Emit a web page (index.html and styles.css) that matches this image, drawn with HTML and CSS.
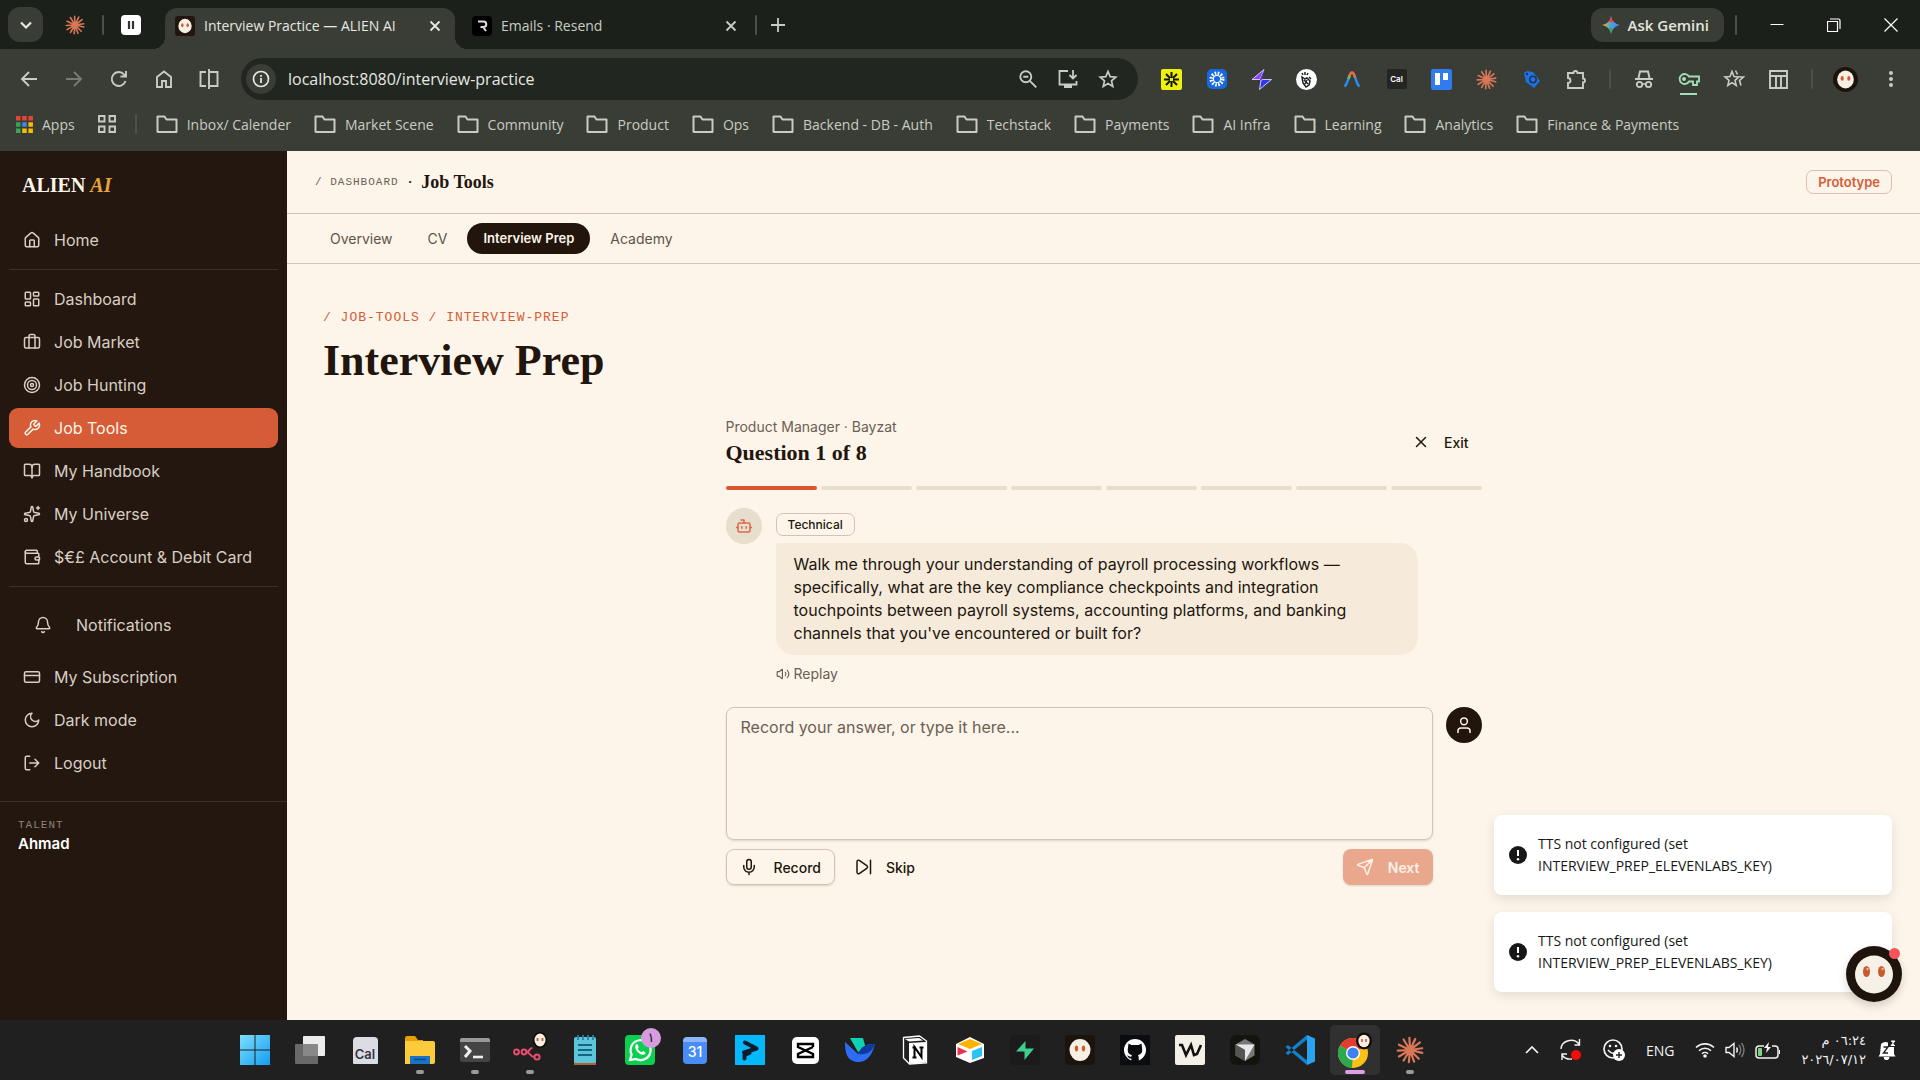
FILE: index.html
```html
<!DOCTYPE html>
<html lang="en">
<head>
  <meta charset="UTF-8" />
  <meta name="viewport" content="width=device-width, initial-scale=1.0"/>
  <title>Interview Practice — ALIEN AI</title>
  <link rel="stylesheet" href="styles.css">
</head>
<body>
  <!-- shared icons -->
  <svg class="sprite" aria-hidden="true">
    <symbol id="folder" viewBox="0 0 22 20"><path d="M1.5 17.5v-15h7l2 3h10v12.500h-18.500z" fill="none" stroke="currentColor" stroke-width="2" stroke-linejoin="round"/></symbol>
    <symbol id="close" viewBox="0 0 12 12"><path d="M1.500 1.500l9 9M10.500 1.500l-9 9" fill="none" stroke="currentColor" stroke-width="1.800"/></symbol>
    <symbol id="burst" viewBox="0 0 24 24">
      <g stroke="#d97757" stroke-width="1.900" stroke-linecap="round">
        <path d="M12 12L11.500 1.500M12 12L16.500 2.500M12 12L20.500 5.500M12 12L22.500 10.500M12 12L22.500 14.500M12 12L19.500 19.500M12 12L15.500 22M12 12L11 22.500M12 12L6.500 21M12 12L2.500 17.500M12 12L1.500 12.500M12 12L2.500 7.500M12 12L6.500 3"/>
      </g>
    </symbol>
    <symbol id="face" viewBox="0 0 24 24">
      <ellipse cx="12" cy="12" rx="8" ry="8.600" fill="#f6f0e4"/>
      <ellipse cx="8.800" cy="11" rx="1.500" ry="2.300" fill="#cf5b36"/>
      <ellipse cx="15.200" cy="11" rx="1.500" ry="2.300" fill="#cf5b36"/>
    </symbol>
    <symbol id="alert" viewBox="0 0 20 20"><circle cx="10" cy="10" r="9" fill="#171717"/><path d="M10 5v6" stroke="#fff" stroke-width="2"/><circle cx="10" cy="14.200" r="1.200" fill="#fff"/></symbol>
  </svg>

  <header class="browser">
    <div class="tabstrip">
      <button class="tab-search" aria-label="Search tabs"><svg width="14" height="14" viewBox="0 0 14 14"><path d="M2 4.500l5 5 5-5" fill="none" stroke="currentColor" stroke-width="2.200"/></svg></button>
      <button class="pin" aria-label="Claude"><svg width="20" height="20"><use href="#burst"/></svg></button>
      <span class="sep"></span>
      <button class="pin" aria-label="Recorder"><svg width="20" height="20" viewBox="0 0 20 20"><rect width="20" height="20" rx="4" fill="#fff"/><path d="M8 6v8M12 6v8" stroke="#333" stroke-width="2.200"/></svg></button>
      <div class="tab tab-active">
        <svg width="20" height="20" viewBox="0 0 24 24"><rect width="24" height="24" rx="4" fill="#21150e"/><use href="#face"/></svg>
        <span class="tab-title">Interview Practice — ALIEN AI</span>
        <button class="tab-close" aria-label="Close tab"><svg width="12" height="12"><use href="#close"/></svg></button>
      </div>
      <div class="tab">
        <svg width="20" height="20" viewBox="0 0 20 20"><rect width="20" height="20" rx="4" fill="#000"/><path d="M6 5.500h5.500a2.500 2.500 0 010 5.500H8.500M11 11l3 4" fill="none" stroke="#ddd" stroke-width="2"/></svg>
        <span class="tab-title">Emails · Resend</span>
        <button class="tab-close" aria-label="Close tab"><svg width="12" height="12"><use href="#close"/></svg></button>
      </div>
      <span class="sep"></span>
      <button class="new-tab" aria-label="New tab"><svg width="14" height="14" viewBox="0 0 14 14"><path d="M7 0v14M0 7h14" stroke="currentColor" stroke-width="1.800"/></svg></button>
      <div class="window-controls">
        <button class="gemini">
          <svg width="18" height="18" viewBox="0 0 18 18">
            <defs><linearGradient id="gem" x1="0" y1="0.500" x2="1" y2="0.500"><stop offset="0" stop-color="#fbbc04"/><stop offset="0.450" stop-color="#4fa3d8"/><stop offset="1" stop-color="#4285f4"/></linearGradient></defs>
            <path d="M9 0c1 5 4 8 9 9-5 1-8 4-9 9-1-5-4-8-9-9 5-1 8-4 9-9z" fill="url(#gem)"/>
            <path d="M9 0c.6 3 1.500 4.600 3 6H6c1.500-1.400 2.400-3 3-6z" fill="#ea4335"/>
            <path d="M9 18c-.6-3-1.500-4.600-3-6h4c0 2-.4 3-1 6z" fill="#34a853"/>
          </svg>Ask Gemini</button>
        <span class="sep"></span>
        <button aria-label="Minimize"><svg width="14" height="14" viewBox="0 0 14 14"><path d="M0.500 6.500h13" stroke="currentColor"/></svg></button>
        <button aria-label="Restore"><svg width="14" height="14" viewBox="0 0 14 14"><path d="M0.500 3.500h10v10h-10zM3 1h8.500q1.500 0 1.500 1.500V11" fill="none" stroke="currentColor" stroke-width="1.200"/></svg></button>
        <button aria-label="Close"><svg width="14" height="14" viewBox="0 0 14 14"><path d="M0.500 0.500l13 13M13.500 0.500l-13 13" stroke="currentColor" stroke-width="1.200"/></svg></button>
      </div>
    </div>

    <div class="toolbar">
      <button aria-label="Back"><svg width="18" height="18" viewBox="0 0 18 18"><path d="M17 9H2M9 2L2 9l7 7" fill="none" stroke="currentColor" stroke-width="1.900"/></svg></button>
      <button class="dim" aria-label="Forward"><svg width="18" height="18" viewBox="0 0 18 18"><path d="M1 9h15M9 2l7 7-7 7" fill="none" stroke="currentColor" stroke-width="1.900"/></svg></button>
      <button aria-label="Reload"><svg width="18" height="18" viewBox="0 0 18 18"><path d="M15.500 11A7 7 0 1114 4.300l2 2M16 1v5.500h-5.500" fill="none" stroke="currentColor" stroke-width="1.900"/></svg></button>
      <button aria-label="Home"><svg width="18" height="18" viewBox="0 0 18 18"><path d="M2 7l7-5.500L16 7v10h-5v-6H7v6H2z" fill="none" stroke="currentColor" stroke-width="1.900"/></svg></button>
      <button aria-label="Split view"><svg width="20" height="20" viewBox="0 0 20 20"><path d="M7 3H1.500v14H7M10 0v20M11 3h7.500v14H11" fill="none" stroke="currentColor" stroke-width="1.900"/></svg></button>
      <div class="omnibox">
        <button class="site-info" aria-label="Site information"><svg width="18" height="18" viewBox="0 0 18 18"><circle cx="9" cy="9" r="7.500" fill="none" stroke="currentColor" stroke-width="1.700"/><path d="M9 8v5M9 5v1.800" stroke="currentColor" stroke-width="1.800"/></svg></button>
        <input class="url" type="text" aria-label="Address bar" value="localhost:8080/interview-practice" />
        <button class="omni-btn" aria-label="Zoom"><svg width="18" height="18" viewBox="0 0 18 18"><circle cx="6.800" cy="6.800" r="5.500" fill="none" stroke="currentColor" stroke-width="1.900"/><path d="M4.300 6.800h5M10.800 10.800l6.500 6.500" stroke="currentColor" stroke-width="1.900"/></svg></button>
        <button class="omni-btn" aria-label="Install app"><svg width="20" height="20" viewBox="0 0 20 20"><path d="M10 2H1.500v13.500h17V12M15 1v8M11.500 6l3.500 3.500L18.500 6" fill="none" stroke="currentColor" stroke-width="1.800"/><path d="M6 15h8v4H6z" fill="currentColor"/></svg></button>
        <button class="omni-btn" aria-label="Bookmark this tab"><svg width="20" height="20" viewBox="0 0 20 20"><path d="M10 2.500l2.200 5.200 5.600.5-4.300 3.700 1.300 5.500-4.800-2.900-4.800 2.900 1.300-5.500L2.200 8.200l5.600-.5z" fill="none" stroke="currentColor" stroke-width="1.700"/></svg></button>
      </div>
      <button aria-label="Extension"><svg width="21" height="21" viewBox="0 0 21 21"><rect width="21" height="21" rx="2" fill="#eef010"/><path d="M10.500 3v6M10.500 12v6M3 10.500h6M12 10.500h6M5 5l4 4M12 12l4 4M16 5l-4 4M9 12l-4 4" stroke="#141500" stroke-width="2"/></svg></button>
      <button aria-label="Extension"><svg width="20" height="20" viewBox="0 0 20 20"><rect width="20" height="20" rx="5" fill="#1768e0"/><circle cx="10" cy="10" r="5.500" fill="none" stroke="#fff" stroke-width="4" stroke-dasharray="1.500 1.380"/><circle cx="10" cy="10" r="3.700" fill="none" stroke="#fff" stroke-width="1"/></svg></button>
      <button aria-label="Extension"><svg width="21" height="21" viewBox="0 0 21 21"><path d="M13 0.500L1 10.500h8z" fill="#8d45f5" stroke="#d3c4ff"/><path d="M12 10.500h8.500L8.500 20.500 10 11z" fill="#3038ee" stroke="#d3c4ff"/><path d="M13 1l-2 9.500h-2z" fill="#5c37ef"/></svg></button>
      <button aria-label="Extension"><svg width="21" height="21" viewBox="0 0 21 21"><circle cx="10.500" cy="10.500" r="10.500" fill="#fff"/><path d="M6 8l3 2 2-1 3 3-1 4-3 2-3-4zM8 11l4 4M11 11l-2 4M6 4l1 2M9 3v3M12 4l-1 2M13 8l2 2" fill="none" stroke="#222" stroke-width="1.500"/></svg></button>
      <button aria-label="Extension"><svg width="18" height="18" viewBox="0 0 18 18"><path d="M1.500 16.500C5 14 6 2.500 9 2.500s4 11.500 7.500 14" fill="none" stroke="#2b8cf0" stroke-width="2.600"/><path d="M6 7.500C7 4 7.800 2.500 9 2.500s2 1.500 3 5" fill="none" stroke="#ef6a3a" stroke-width="2.600"/><path d="M5.500 9l1-3" stroke="#5fc25a" stroke-width="2.600"/></svg></button>
      <button aria-label="Cal extension"><span class="cal-ext">Cal</span></button>
      <button aria-label="Trello"><svg width="21" height="21" viewBox="0 0 21 21"><rect width="21" height="21" rx="2" fill="#2f7bf0"/><path d="M4 4h5v12H4zM12 4h5v7h-5z" fill="#fff"/></svg></button>
      <button aria-label="Claude"><svg width="21" height="21"><use href="#burst"/></svg></button>
      <button aria-label="Extension"><svg width="18" height="19" viewBox="0 0 18 19"><path d="M1 3l3-2 6 1 7 9-6 7-8-6z" fill="#1a73e8"/><circle cx="10" cy="9.500" r="3.200" fill="none" stroke="#2a3040" stroke-width="1.500"/><circle cx="4" cy="4" r="1.200" fill="#2a3040"/></svg></button>
      <button aria-label="Extensions"><svg width="21" height="21" viewBox="0 0 21 21"><path d="M2 4h5.500a2 2 0 014 0H17v5.500a2 2 0 010 4V19H2v-5a2.500 2.500 0 000-5z" fill="none" stroke="currentColor" stroke-width="1.900"/></svg></button>
      <span class="sep"></span>
      <button aria-label="Incognito"><svg width="20" height="19" viewBox="0 0 20 19"><path d="M1 9h18M4.500 8L6 1.500h8L15.500 8" fill="none" stroke="currentColor" stroke-width="1.900"/><circle cx="5.500" cy="14.500" r="2.700" fill="none" stroke="currentColor" stroke-width="1.800"/><circle cx="14.500" cy="14.500" r="2.700" fill="none" stroke="currentColor" stroke-width="1.800"/><path d="M8 14h4" stroke="currentColor" stroke-width="1.600"/></svg></button>
      <button class="key" aria-label="Passwords"><svg width="23" height="28" viewBox="0 0 23 28"><path d="M12 9.500a5 5 0 100 5h4V18h4v-3.500h2v-5z" fill="none" stroke="currentColor" stroke-width="1.800"/><circle cx="7" cy="12" r="2" fill="currentColor"/><path d="M3 27h17" stroke="currentColor" stroke-width="2"/></svg></button>
      <button aria-label="Bookmarks"><svg width="22" height="20" viewBox="0 0 22 20"><path d="M9 2.500l2 5 5 .4-4 3.500 1.200 5.100L9 13.700 4.800 16.500 6 11.400 2 7.900l5-.4z" fill="none" stroke="currentColor" stroke-width="1.600"/><path d="M12.500 1.500l2 4M17 8h3.500l-4 3.500 1.500 5" fill="none" stroke="currentColor" stroke-width="1.600"/></svg></button>
      <button aria-label="Side panel"><svg width="19" height="19" viewBox="0 0 19 19"><path d="M1 1h17v17H1zM1 6h17M7 6v12M12 6v12" fill="none" stroke="currentColor" stroke-width="1.900"/></svg></button>
      <span class="sep"></span>
      <button aria-label="Profile"><svg width="25" height="25" viewBox="0 0 24 24"><circle cx="12" cy="12" r="12" fill="#1d130d"/><use href="#face"/></svg></button>
      <button aria-label="Menu"><svg width="4" height="18" viewBox="0 0 4 18"><circle cx="2" cy="3" r="2" fill="currentColor"/><circle cx="2" cy="9" r="2" fill="currentColor"/><circle cx="2" cy="15" r="2" fill="currentColor"/></svg></button>
    </div>

    <nav class="bookmarks" aria-label="Bookmarks">
      <a href="#"><svg width="17" height="17" viewBox="0 0 17 17"><path d="M0 0h4.500v4.500H0zM6.200 0h4.500v4.500H6.200zM12.400 0h4.500v4.500h-4.500z" fill="#ea4335"/><path d="M0 6.200h4.500v4.500H0zM0 12.400h4.500v4.500H0z" fill="#34a853"/><path d="M6.200 6.200h4.500v4.500H6.200z" fill="#4285f4"/><path d="M12.400 6.200h4.500v4.500h-4.500zM6.200 12.400h4.500v4.500H6.200zM12.400 12.400h4.500v4.500h-4.500z" fill="#fbbc04"/></svg>Apps</a>
      <a href="#" aria-label="Tab groups"><svg width="18" height="18" viewBox="0 0 18 18"><path d="M1 1h5.500v5.500H1zM11.500 1H17v5.500h-5.500zM1 11.500h5.500V17H1zM11.500 11.500H17V17h-5.500z" fill="none" stroke="currentColor" stroke-width="1.900"/></svg></a>
      <span class="sep"></span>
      <a href="#"><svg width="22" height="20"><use href="#folder"/></svg>Inbox/ Calender</a>
      <a href="#"><svg width="22" height="20"><use href="#folder"/></svg>Market Scene</a>
      <a href="#"><svg width="22" height="20"><use href="#folder"/></svg>Community</a>
      <a href="#"><svg width="22" height="20"><use href="#folder"/></svg>Product</a>
      <a href="#"><svg width="22" height="20"><use href="#folder"/></svg>Ops</a>
      <a href="#"><svg width="22" height="20"><use href="#folder"/></svg>Backend - DB - Auth</a>
      <a href="#"><svg width="22" height="20"><use href="#folder"/></svg>Techstack</a>
      <a href="#"><svg width="22" height="20"><use href="#folder"/></svg>Payments</a>
      <a href="#"><svg width="22" height="20"><use href="#folder"/></svg>AI Infra</a>
      <a href="#"><svg width="22" height="20"><use href="#folder"/></svg>Learning</a>
      <a href="#"><svg width="22" height="20"><use href="#folder"/></svg>Analytics</a>
      <a href="#"><svg width="22" height="20"><use href="#folder"/></svg>Finance &amp; Payments</a>
    </nav>
  </header>

  <div class="app">
    <aside class="sidebar">
      <a class="logo" href="#">ALIEN <em>AI</em></a>
      <nav class="side-nav" aria-label="Main">
        <a class="side-link" href="#"><svg class="icon" viewBox="0 0 24 24"><path d="M15 21v-8a1 1 0 0 0-1-1h-4a1 1 0 0 0-1 1v8"/><path d="M3 10a2 2 0 0 1 .709-1.528l7-5.999a2 2 0 0 1 2.582 0l7 5.999A2 2 0 0 1 21 10v9a2 2 0 0 1-2 2H5a2 2 0 0 1-2-2z"/></svg>Home</a>
        <hr>
        <a class="side-link" href="#"><svg class="icon" viewBox="0 0 24 24"><rect x="3" y="3" width="7" height="9" rx="1"/><rect x="14" y="3" width="7" height="5" rx="1"/><rect x="14" y="12" width="7" height="9" rx="1"/><rect x="3" y="16" width="7" height="5" rx="1"/></svg>Dashboard</a>
        <a class="side-link" href="#"><svg class="icon" viewBox="0 0 24 24"><path d="M16 20V4a2 2 0 0 0-2-2h-4a2 2 0 0 0-2 2v16"/><rect x="2" y="6" width="20" height="14" rx="2"/></svg>Job Market</a>
        <a class="side-link" href="#"><svg class="icon" viewBox="0 0 24 24"><circle cx="12" cy="12" r="10"/><circle cx="12" cy="12" r="6"/><circle cx="12" cy="12" r="2"/></svg>Job Hunting</a>
        <a class="side-link side-active" href="#"><svg class="icon" viewBox="0 0 24 24"><path d="M14.700 6.300a1 1 0 0 0 0 1.400l1.600 1.600a1 1 0 0 0 1.400 0l3.770-3.770a6 6 0 0 1-7.940 7.940l-6.910 6.910a2.120 2.120 0 0 1-3-3l6.910-6.910a6 6 0 0 1 7.940-7.940l-3.760 3.760z"/></svg>Job Tools</a>
        <a class="side-link" href="#"><svg class="icon" viewBox="0 0 24 24"><path d="M12 7v14"/><path d="M3 18a1 1 0 0 1-1-1V4a1 1 0 0 1 1-1h5a4 4 0 0 1 4 4 4 4 0 0 1 4-4h5a1 1 0 0 1 1 1v13a1 1 0 0 1-1 1h-6a3 3 0 0 0-3 3 3 3 0 0 0-3-3z"/></svg>My Handbook</a>
        <a class="side-link" href="#"><svg class="icon" viewBox="0 0 24 24"><path d="M11.017 2.814a1 1 0 0 1 1.966 0l1.051 5.558a2 2 0 0 0 1.594 1.594l5.558 1.051a1 1 0 0 1 0 1.966l-5.558 1.051a2 2 0 0 0-1.594 1.594l-1.051 5.558a1 1 0 0 1-1.966 0l-1.051-5.558a2 2 0 0 0-1.594-1.594l-5.558-1.051a1 1 0 0 1 0-1.966l5.558-1.051a2 2 0 0 0 1.594-1.594z"/><path d="M20 2v4M22 4h-4"/><circle cx="4" cy="20" r="2"/></svg>My Universe</a>
        <a class="side-link" href="#"><svg class="icon" viewBox="0 0 24 24"><path d="M19 7V4a1 1 0 0 0-1-1H5a2 2 0 0 0 0 4h15a1 1 0 0 1 1 1v4h-3a2 2 0 0 0 0 4h3a1 1 0 0 0 1-1v-2a1 1 0 0 0-1-1"/><path d="M3 5v14a2 2 0 0 0 2 2h15a1 1 0 0 0 1-1v-4"/></svg>$€£ Account &amp; Debit Card</a>
        <hr>
        <a class="side-link side-notify" href="#"><svg class="icon" viewBox="0 0 24 24"><path d="M10.268 21a2 2 0 0 0 3.464 0"/><path d="M3.262 15.326A1 1 0 0 0 4 17h16a1 1 0 0 0 .74-1.673C19.410 13.956 18 12.499 18 8A6 6 0 0 0 6 8c0 4.499-1.411 5.956-2.738 7.326"/></svg>Notifications</a>
        <a class="side-link" href="#"><svg class="icon" viewBox="0 0 24 24"><rect x="2" y="5" width="20" height="14" rx="2"/><path d="M2 10h20"/></svg>My Subscription</a>
        <a class="side-link" href="#"><svg class="icon" viewBox="0 0 24 24"><path d="M12 3a6 6 0 0 0 9 9 9 9 0 1 1-9-9z"/></svg>Dark mode</a>
        <a class="side-link" href="#"><svg class="icon" viewBox="0 0 24 24"><path d="M9 21H5a2 2 0 0 1-2-2V5a2 2 0 0 1 2-2h4M16 17l5-5-5-5M21 12H9"/></svg>Logout</a>
      </nav>
      <div class="account">
        <div class="role">TALENT</div>
        <div class="name">Ahmad</div>
      </div>
    </aside>

    <main class="main">
      <div class="topbar">
        <div class="crumbs"><span class="crumb">/ DASHBOARD</span><span class="dot">·</span><strong>Job Tools</strong></div>
        <span class="badge">Prototype</span>
      </div>
      <nav class="tabs" aria-label="Job tools">
        <a href="#">Overview</a>
        <a href="#">CV</a>
        <a class="tabs-active" href="#">Interview Prep</a>
        <a href="#">Academy</a>
      </nav>

      <div class="content">
        <p class="kicker">/ JOB-TOOLS / INTERVIEW-PREP</p>
        <h1>Interview Prep</h1>

        <section class="interview">
          <div class="interview-head">
            <div>
              <p class="role-line">Product Manager · Bayzat</p>
              <h2>Question 1 of 8</h2>
            </div>
            <button class="btn"><svg class="icon" viewBox="0 0 24 24"><path d="M18 6L6 18M6 6l12 12"/></svg>Exit</button>
          </div>

          <div class="progress">
            <span class="done"></span><span></span><span></span><span></span><span></span><span></span><span></span><span></span>
          </div>

          <div class="question">
            <div class="avatar avatar-bot"><svg class="icon" viewBox="0 0 24 24"><path d="M12 8V4H8"/><rect x="4" y="8" width="16" height="12" rx="2"/><path d="M2 14h2M20 14h2M15 13v2M9 13v2"/></svg></div>
            <div class="question-body">
              <span class="type">Technical</span>
              <p class="bubble">Walk me through your understanding of payroll processing workflows — specifically, what are the key compliance checkpoints and integration touchpoints between payroll systems, accounting platforms, and banking channels that you've encountered or built for?</p>
              <button class="replay"><svg class="icon" viewBox="0 0 24 24"><path d="M11 4.702a.705.705 0 0 0-1.203-.498L6.413 7.587A1.400 1.400 0 0 1 5.416 8H3a1 1 0 0 0-1 1v6a1 1 0 0 0 1 1h2.416a1.400 1.400 0 0 1 .997.413l3.383 3.384A.705.705 0 0 0 11 19.298z"/><path d="M16 9a5 5 0 0 1 0 6M19.364 18.364a9 9 0 0 0 0-12.728"/></svg>Replay</button>
            </div>
          </div>

          <div class="answer">
            <div class="answer-body">
              <textarea aria-label="Your answer" placeholder="Record your answer, or type it here..."></textarea>
              <div class="actions">
                <button class="btn btn-outline"><svg class="icon" viewBox="0 0 24 24"><path d="M12 19v3M19 10v2a7 7 0 0 1-14 0v-2"/><rect x="9" y="2" width="6" height="13" rx="3"/></svg>Record</button>
                <button class="btn"><svg class="icon" viewBox="0 0 24 24"><path d="M4 5a2 2 0 0 1 3-1.700l10 7a2 2 0 0 1 0 3.400l-10 7A2 2 0 0 1 4 19zM22 3v18"/></svg>Skip</button>
                <button class="btn btn-next" disabled><svg class="icon" viewBox="0 0 24 24"><path d="M14.536 21.686a.5.5 0 0 0 .937-.024l6.500-19a.496.496 0 0 0-.635-.635l-19 6.500a.5.5 0 0 0-.024.937l7.930 3.180a2 2 0 0 1 1.112 1.110zM21.854 2.147l-10.940 10.939"/></svg>Next</button>
              </div>
            </div>
            <div class="avatar avatar-user"><svg class="icon" viewBox="0 0 24 24"><circle cx="12" cy="7" r="4.500"/><path d="M4 22v-2a4 4 0 0 1 4-4h8a4 4 0 0 1 4 4v2"/></svg></div>
          </div>
        </section>
      </div>
    </main>

    <div class="toasts">
      <div class="toast" role="status"><svg width="20" height="20"><use href="#alert"/></svg><span>TTS not configured (set INTERVIEW_PREP_ELEVENLABS_KEY)</span></div>
      <div class="toast" role="status"><svg width="20" height="20"><use href="#alert"/></svg><span>TTS not configured (set INTERVIEW_PREP_ELEVENLABS_KEY)</span></div>
    </div>
    <button class="assistant" aria-label="Open assistant">
      <svg width="56" height="56" viewBox="0 0 56 56"><circle cx="28" cy="28" r="28" fill="#1e140d"/><circle cx="28" cy="28.500" r="19" fill="#f5f1e7"/><ellipse cx="20.500" cy="25.500" rx="3.500" ry="5.500" fill="#c95a2e"/><ellipse cx="35.500" cy="25.500" rx="3.500" ry="5.500" fill="#c95a2e"/><circle cx="21.500" cy="23" r="1.200" fill="#f0b596"/><circle cx="36.500" cy="23" r="1.200" fill="#f0b596"/></svg>
      <span class="assistant-dot"></span>
    </button>
  </div>

  <footer class="taskbar">
    <div class="apps">
      <button aria-label="Start"><svg width="30" height="30" viewBox="0 0 30 30"><defs><linearGradient id="win" x1="0" y1="0" x2="1" y2="1"><stop offset="0" stop-color="#7be0fc"/><stop offset="1" stop-color="#159cf2"/></linearGradient></defs><path d="M0 0h14.500v14.500H0zM15.500 0H30v14.500H15.500zM0 15.500h14.500V30H0zM15.500 15.500H30V30H15.500z" fill="url(#win)"/></svg></button>
      <button aria-label="Task view"><svg width="30" height="30" viewBox="0 0 30 30"><rect x="8" y="1" width="22" height="20" rx="1" fill="#ececec"/><rect x="0" y="9" width="23" height="20" rx="1" fill="#777" fill-opacity="0.850"/></svg></button>
      <button aria-label="Cal"><span class="cal-app">Cal</span></button>
      <button aria-label="File Explorer"><svg width="30" height="28" viewBox="0 0 30 28"><path d="M0 2a2 2 0 012-2h8l3 4h5v6H0z" fill="#e3a008"/><path d="M0 5h28a2 2 0 012 2v19a2 2 0 01-2 2H0z" fill="#fccb3c"/><path d="M5 20h20v8H5z" fill="#1774c6"/><path d="M9 23.500h12" stroke="#0b4a86" stroke-width="1.600"/></svg><i class="run"></i></button>
      <button aria-label="Terminal"><svg width="30" height="24" viewBox="0 0 30 24"><rect width="30" height="24" rx="2" fill="#444"/><path d="M0 4V2a2 2 0 012-2h26a2 2 0 012 2v2z" fill="#999"/><path d="M5 8l5 5-5 6" fill="none" stroke="#eee" stroke-width="3"/><path d="M13 19h10" stroke="#eee" stroke-width="2.600"/></svg><i class="run"></i></button>
      <button aria-label="n8n"><svg width="34" height="36" viewBox="0 0 34 36"><ellipse cx="27" cy="8" rx="7" ry="8" fill="#120c08"/><ellipse cx="27" cy="8" rx="5.500" ry="6.500" fill="#f6f0e4"/><path d="M24.500 6v3M29.500 6v3" stroke="#cf5b36" stroke-width="1.800"/><g fill="none" stroke="#ea4b71" stroke-width="2"><circle cx="3.500" cy="20" r="2.400"/><circle cx="11" cy="20" r="2.400"/><circle cx="24" cy="25" r="2.600"/><path d="M13.400 20c4 0 2-4 6-4M13.400 20c4 0 3 5 8 5"/></g></svg><i class="run"></i></button>
      <button aria-label="Notepad"><svg width="24" height="32" viewBox="0 0 24 32"><rect x="1" y="3" width="22" height="27" rx="2" fill="#5cc5dc"/><path d="M1 29h22v2H1z" fill="#b2622f"/><path d="M5 1v5M10 1v5M15 1v5M20 1v5" stroke="#2584a5" stroke-width="1.800"/><path d="M5 11h14M5 16h14M5 21h14" stroke="#17657e" stroke-width="1.800"/></svg></button>
      <button aria-label="WhatsApp"><svg width="30" height="30" viewBox="0 0 30 30"><rect width="30" height="30" rx="4" fill="#0bd04f"/><path d="M5 25l1.600-5.500A10 10 0 1111 24z" fill="none" stroke="#fff" stroke-width="2.200"/><path d="M11 9.500c1-1 2 0 2.500 2s-1 1.500-.5 2.500 2 2.500 3 3 1.500-1.500 3-.5 2 1.500 1 2.500-3 1.500-6-.8-5-6.200-3-8.700z" fill="#fff"/></svg><span class="count">١</span></button>
      <button aria-label="Calendar"><span class="gcal">31</span></button>
      <button aria-label="Player"><svg width="30" height="30" viewBox="0 0 30 30"><rect width="30" height="30" fill="#05b8fb"/><path d="M10 7.500l11.500 6L9 17.500M9.500 23.500v-3.500l5-2" fill="none" stroke="#0c1c28" stroke-width="4" stroke-linejoin="round" stroke-linecap="round"/></svg></button>
      <button aria-label="CapCut"><svg width="27" height="27" viewBox="0 0 27 27"><rect width="27" height="27" rx="5" fill="#fff"/><path d="M21 10V7H6v3l15 7v3H6v-3l15-7" fill="none" stroke="#000" stroke-width="2.400"/></svg></button>
      <button aria-label="Bird"><svg width="30" height="26" viewBox="0 0 30 26"><path d="M5 1h13l3 11-8 3z" fill="#0ed3b3"/><path d="M0 5l13 12c4-9 10-10 17-10-3 12-9 19-18 18C2 24 0 16 0 5z" fill="#2f6cf6"/><path d="M13 17c3-8 9-10 17-10-3 8-8 11-17 10z" fill="#0e3a9b"/></svg></button>
      <button aria-label="Notion"><svg width="26" height="30" viewBox="0 0 26 30"><path d="M1.500 2.500l16-1.500 7 5v22l-17 1-6-6z" fill="#202020" stroke="#fff" stroke-width="1.300"/><path d="M7 8l17-1v20.500L7 28.500z" fill="#fff"/><path d="M3 4l14-1 4 2.500-14 1z" fill="#fff"/><path d="M12.500 22V12l7 10V12M10.500 12.500h3.500M17.500 12.500h4M10.500 22.500h4" fill="none" stroke="#000" stroke-width="2"/></svg></button>
      <button aria-label="Airtable"><svg width="30" height="28" viewBox="0 0 30 28"><path d="M1 8L15 1l14 7v14l-14 5-14-6z" fill="#fff"/><path d="M3 8l12-5 12 5-12 5z" fill="#fcb400"/><path d="M17 15l10-4v9l-10 4z" fill="#2bc2f5"/><path d="M2.500 11l10 4.500-10 4z" fill="#e8304f"/></svg></button>
      <button aria-label="Supabase"><svg width="30" height="30" viewBox="0 0 30 30"><rect width="30" height="30" rx="4" fill="#1b1b1b"/><path d="M15.500 6v7.500H24L14.500 25v-8.500H6z" fill="#3ecf8e"/></svg></button>
      <button aria-label="Alien AI"><svg width="30" height="30" viewBox="0 0 30 30"><rect width="30" height="30" rx="4" fill="#1b140d"/><ellipse cx="15" cy="15" rx="10.500" ry="11" fill="#f6f0e4"/><ellipse cx="11.500" cy="13.500" rx="1.700" ry="3" fill="#cf5b36"/><ellipse cx="18.500" cy="13.500" rx="1.700" ry="3" fill="#cf5b36"/></svg></button>
      <button aria-label="GitHub"><svg width="30" height="30" viewBox="0 0 30 30"><rect width="30" height="30" fill="#0a0c10"/><circle cx="15" cy="15" r="11" fill="#fff"/><path d="M8.500 8.500l3 1.500h7l3-1.500.5 4c1 5-1 7-4 7.500.8 1 .8 3 .8 6h-7.500v-2.500c-3 .5-3-2-4.500-3 2-.3 2.500 1.500 4.500 1.200 0-.8.300-1.200.7-1.700-3-.5-5-2.500-4-7.500z" fill="#0a0c10"/></svg></button>
      <button aria-label="W app"><svg width="30" height="30" viewBox="0 0 30 30"><rect width="30" height="30" rx="2" fill="#f4f0e7"/><path d="M4 10h3l4 10 5-10 3 10 3-1 4-9" fill="none" stroke="#111" stroke-width="2.600"/></svg></button>
      <button aria-label="Cursor"><svg width="30" height="30" viewBox="0 0 30 30"><rect width="30" height="30" rx="6" fill="#14140f"/><path d="M15 4l9.500 5.500v11L15 26l-9.500-5.500v-11z" fill="#777"/><path d="M5.500 9.500h19L15 26V15z" fill="#e8e8e8"/><path d="M5.500 9.500L15 15v11l-9.500-5.500z" fill="#555"/></svg></button>
      <button aria-label="VS Code"><svg width="30" height="30" viewBox="0 0 30 30"><path d="M22 0l8 3.500v23L22 30z" fill="#2aa3ef"/><path d="M22 4.500L3 20l-2.500-2L22 0zM22 25.500L3 10 .5 12 22 30z" fill="#1181cc"/></svg></button>
      <button class="focused" aria-label="Chrome"><svg width="34" height="36" viewBox="0 0 34 36"><circle cx="15" cy="21" r="15" fill="#fbc116"/><path d="M15 21L2 13.500a15 15 0 0126 0z" fill="#e33b2e"/><path d="M15 21L2 13.500A15 15 0 0014 36z" fill="#2da94f"/><circle cx="15" cy="21" r="7" fill="#fff"/><circle cx="15" cy="21" r="5.600" fill="#3f7ff0"/><ellipse cx="26" cy="9" rx="8" ry="8.500" fill="#120c08"/><ellipse cx="26" cy="9" rx="5.600" ry="6.200" fill="#f6f0e4"/><path d="M24 7v3M28 7v3" stroke="#cf5b36" stroke-width="1.600"/></svg><i class="run run-on"></i></button>
      <button aria-label="Claude"><svg width="28" height="28"><use href="#burst"/></svg><i class="run"></i></button>
    </div>
    <div class="tray">
      <button aria-label="Show hidden icons"><svg width="14" height="8" viewBox="0 0 14 8"><path d="M1 7l6-6 6 6" fill="none" stroke="currentColor" stroke-width="1.700"/></svg></button>
      <button aria-label="Update"><svg width="22" height="22" viewBox="0 0 22 22"><path d="M1 10a10 9 0 0118-5M19.500 0v6h-5M2 16a10 9 0 0010 4M2 21v-6h5" fill="none" stroke="currentColor" stroke-width="1.400"/><circle cx="16" cy="16" r="5" fill="#f60b0b"/></svg></button>
      <button aria-label="Emoji"><svg width="22" height="22" viewBox="0 0 22 22"><circle cx="10" cy="10" r="9" fill="none" stroke="currentColor" stroke-width="1.700"/><circle cx="7" cy="7" r="1.300" fill="currentColor"/><circle cx="13" cy="7" r="1.300" fill="currentColor"/><path d="M5 11q5 6 9 1" fill="none" stroke="currentColor" stroke-width="1.500"/><circle cx="16" cy="16" r="6" fill="#fff"/><path d="M16 13v6M13 16h6" stroke="#222" stroke-width="1.400"/></svg></button>
      <button class="lang">ENG</button>
      <button class="status" aria-label="Network, volume, battery">
        <svg width="20" height="16" viewBox="0 0 20 16"><path d="M1 5.500a13 13 0 0118 0M4 8.700a8.500 8.500 0 0112 0M7 11.700a4.300 4.300 0 016 0" fill="none" stroke="currentColor" stroke-width="1.600"/><circle cx="10" cy="14" r="1.800" fill="currentColor"/></svg>
        <svg width="20" height="16" viewBox="0 0 20 16"><path d="M1 5.500h3l5-4v13l-5-4H1z" fill="none" stroke="currentColor" stroke-width="1.400"/><path d="M11.500 5.500q1.800 2.500 0 5" fill="none" stroke="currentColor" stroke-width="1.400"/><path d="M14 3q3.500 5 0 10M16.500 1q5 7 0 14" fill="none" stroke="#777" stroke-width="1.400"/></svg>
        <svg width="25" height="17" viewBox="0 0 25 17"><path d="M9 4H4a3 3 0 00-3 3v6a3 3 0 003 3h16a3 3 0 003-3V7a3 3 0 00-3-3h-3" fill="none" stroke="currentColor" stroke-width="1.500"/><rect x="3" y="6" width="4" height="8" rx="1" fill="#7ed383"/><path d="M14 0l-5 6h3l-1 5 5-6h-3z" fill="currentColor"/><path d="M24.500 8v4" stroke="currentColor"/></svg>
      </button>
      <button class="clock" dir="rtl" lang="ar"><span>٠٦:٢٤ م</span><span>٢٠٢٦/٠٧/١٢</span></button>
      <button aria-label="Notifications"><svg width="18" height="20" viewBox="0 0 18 20"><path d="M3 4q3-3 7-1.500V7h6v7l1.500 2.500H.5L2 14z" fill="#fff"/><path d="M6 17.500h5l-1 2H7zM13 1h4l-4 4.500h4" fill="#fff" stroke="#fff" stroke-width="1"/><path d="M5.500 7h4.500l-4.500 6h4.500" fill="none" stroke="#222" stroke-width="1.400"/></svg></button>
    </div>
  </footer>
</body>
</html>
```

FILE: styles.css
```css
* { box-sizing: border-box; }

body {
  margin: 0;
  height: 100vh;
  display: flex;
  flex-direction: column;
  overflow: hidden;
  font-family: Inter, "Liberation Sans", sans-serif;
  background: #fdf5e9;
  color: #21150e;
}
button {
  padding: 0;
  border: none;
  background: none;
  color: inherit;
  font: inherit;
}
a { color: inherit; text-decoration: none; }
p, h1, h2 { margin: 0; }
svg { flex: none; display: block; }
.sprite { position: absolute; width: 0; height: 0; }
.icon {
  width: 18px;
  height: 18px;
  fill: none;
  stroke: currentColor;
  stroke-width: 2;
  stroke-linecap: round;
  stroke-linejoin: round;
}

/* browser */
.browser {
  background: #393d35;
  color: #c9cbc4;
  font-family: "Open Sans", "Noto Sans", sans-serif;
  font-size: 14px;
}
.sep {
  flex: none;
  width: 2px;
  height: 20px;
  border-radius: 1px;
  background: #4c5148;
}
.tabstrip {
  display: flex;
  align-items: center;
  height: 49px;
  padding-left: 8px;
  background: #1c201b;
}
.tab-search {
  display: grid;
  place-items: center;
  width: 35px;
  height: 35px;
  margin-right: 9px;
  border-radius: 12px;
  background: #393d35;
  color: #e6e8e2;
}
.pin {
  display: grid;
  place-items: center;
  width: 46px;
  height: 35px;
}
.pin + .sep { margin: 0 4px; }
.tab {
  position: relative;
  display: flex;
  align-items: center;
  gap: 9px;
  width: 300px;
  height: 41px;
  margin-top: 8px;
  padding: 0 18px 6px 17px;
}
.tab-active {
  width: 290px;
  margin-left: 11px;
  padding: 0 14px 6px 10px;
  border-radius: 12px 12px 0 0;
  background: #393d35;
  color: #e6e8e2;
}
.tab-active::before,
.tab-active::after {
  content: "";
  position: absolute;
  bottom: 0;
  width: 12px;
  height: 12px;
}
.tab-active::before { left: -12px; background: radial-gradient(circle at 0 0, #1c201b 12px, #393d35 12px); }
.tab-active::after { right: -12px; background: radial-gradient(circle at 100% 0, #1c201b 12px, #393d35 12px); }
.tab-title { flex: 1; white-space: nowrap; }
.new-tab { margin-left: 14px; }
.window-controls {
  display: flex;
  align-items: center;
  margin-left: auto;
  padding-right: 1px;
  color: #fff;
}
.window-controls > button:not(.gemini) {
  display: grid;
  place-items: center;
  width: 57px;
  height: 48px;
}
.window-controls .sep { margin: 0 11px; }
.gemini {
  display: flex;
  align-items: center;
  gap: 8px;
  height: 34px;
  padding: 0 15px 0 11px;
  border-radius: 12px;
  background: #393d35;
  color: #e3e5df;
  font-size: 15px;
  font-weight: 600;
}
.toolbar {
  display: flex;
  align-items: center;
  height: 60px;
  padding: 0 7px 0 6px;
}
.toolbar > button {
  display: grid;
  place-items: center;
  width: 45px;
  height: 42px;
}
.toolbar > .sep { margin: 0 10px; }
.toolbar .dim { color: #777b72; }
.toolbar .key { padding-top: 4px; color: #a3dfb9; }
.omnibox {
  flex: 1;
  display: flex;
  align-items: center;
  height: 42px;
  margin: 0 11px 0 10px;
  padding: 0 10px 0 5px;
  border-radius: 21px;
  background: #222620;
}
.site-info {
  display: grid;
  place-items: center;
  width: 30px;
  height: 30px;
  border-radius: 15px;
  background: #393d35;
  color: #e6e8e2;
}
.url {
  flex: 1;
  min-width: 0;
  padding: 0 12px;
  border: none;
  background: none;
  color: #e6e8e2;
  font: 16px "Open Sans", "Noto Sans", sans-serif;
}
.omni-btn {
  display: grid;
  place-items: center;
  width: 40px;
}
.cal-ext {
  display: grid;
  place-items: center;
  width: 20px;
  height: 20px;
  border-radius: 2px;
  background: #242424;
  color: #fff;
  font: 600 8px Inter, sans-serif;
}
.bookmarks {
  display: flex;
  align-items: center;
  gap: 23px;
  height: 42px;
  padding: 0 16px 12px;
  white-space: nowrap;
}
.bookmarks a { display: flex; align-items: center; gap: 9px; }
.bookmarks .sep { margin: 0 -4px; }

/* app */
.app {
  position: relative;
  flex: 1;
  min-height: 0;
  display: flex;
}
.sidebar {
  flex: none;
  width: 287px;
  background: #23170f;
  color: #d8cfc4;
}
.logo {
  display: block;
  padding: 22px 22px 0;
  color: #fdf5e9;
  font: bold 20px/24px "Liberation Serif", serif;
}
.logo em { color: #e9a33b; }
.side-nav {
  display: flex;
  flex-direction: column;
  gap: 3px;
  padding: 23px 9px 18px;
}
.side-nav hr {
  width: 100%;
  height: 1px;
  margin: 6px 0;
  border: none;
  background: #3c3027;
}
.side-link {
  display: flex;
  align-items: center;
  gap: 13px;
  height: 40px;
  padding: 0 14px;
  border-radius: 9px;
  font-size: 16px;
}
.side-active { background: #d55c37; color: #fdf5e9; }
.side-notify {
  gap: 24px;
  height: 58px;
  padding-left: 25px;
}
.account {
  padding: 14px 18px;
  border-top: 1px solid #3c3027;
}
.role {
  color: #8d8379;
  font: 11px/18px "Liberation Mono", monospace;
  letter-spacing: 1px;
}
.name {
  color: #fff;
  font-size: 15px;
  font-weight: 600;
  line-height: 20px;
}
.main { flex: 1; min-width: 0; background: #fdf5e9; }
.topbar {
  display: flex;
  align-items: center;
  justify-content: space-between;
  height: 63px;
  padding: 0 28px;
  border-bottom: 1px solid #cfc5b6;
}
.crumbs { display: flex; align-items: center; gap: 9px; }
.crumb {
  color: #6b6055;
  font: 11px "Liberation Mono", monospace;
  letter-spacing: 1px;
}
.crumbs strong { font: bold 18px "Liberation Serif", serif; }
.badge {
  padding: 0 11px;
  border: 1px solid #dcbfae;
  border-radius: 7px;
  color: #d55c37;
  font-size: 13px;
  font-weight: 600;
  line-height: 22px;
}
.tabs {
  display: flex;
  align-items: center;
  gap: 5px;
  height: 50px;
  padding: 0 28px;
  border-bottom: 1px solid #cfc5b6;
  color: #5f544a;
  font-size: 14px;
}
.tabs a {
  padding: 0 15px;
  border-radius: 16px;
  line-height: 31px;
}
.tabs .tabs-active {
  padding: 0 16px;
  background: #21150e;
  color: #fdf5e9;
  font-size: 13px;
  font-weight: 600;
}
.content { padding: 46px 36px; }
.kicker {
  color: #d55c37;
  font: 13px/16px "Liberation Mono", monospace;
  letter-spacing: 1px;
}
h1 {
  margin-top: 7px;
  font: bold 44px/56px "Liberation Serif", serif;
}
.interview { max-width: 756px; margin: 28px auto 0; }
.interview-head {
  display: flex;
  align-items: center;
  justify-content: space-between;
}
.role-line {
  color: #6b6055;
  font-size: 14px;
  line-height: 20px;
}
h2 {
  margin-top: 2px;
  font: bold 22px/28px "Liberation Serif", serif;
}
.progress {
  display: flex;
  gap: 4px;
  margin-top: 19px;
}
.progress span {
  flex: 1;
  height: 4px;
  border-radius: 2px;
  background: #e8decd;
}
.progress .done { background: #d9562c; }
.avatar {
  flex: none;
  display: grid;
  place-items: center;
  width: 36px;
  height: 36px;
  border-radius: 18px;
}
.avatar-bot { background: #e8decd; color: #d96a4a; }
.avatar-user { background: #21150e; color: #fdf5e9; }
.question {
  display: flex;
  gap: 14px;
  margin-top: 18px;
}
.question-body {
  display: flex;
  flex-direction: column;
  align-items: flex-start;
  width: 85%;
  padding-top: 5px;
}
.type {
  padding: 0 11px;
  border: 1px solid #cfc5b6;
  border-radius: 7px;
  font-size: 12px;
  font-weight: 500;
  line-height: 21px;
}
.bubble {
  margin-top: 7px;
  padding: 10px 18px;
  border-radius: 2px 18px 18px 18px;
  background: #f6ebdb;
  font-size: 16px;
  line-height: 23px;
}
.replay {
  display: flex;
  align-items: center;
  gap: 4px;
  margin-top: 9px;
  color: #6b6055;
  font-size: 14px;
  line-height: 20px;
}
.replay .icon { width: 14px; height: 14px; }
.answer {
  display: flex;
  gap: 13px;
  margin-top: 23px;
}
.answer-body { flex: 1; }
textarea {
  display: block;
  width: 100%;
  height: 133px;
  padding: 8px 14px;
  border: 1px solid #cfc5b6;
  border-radius: 8px;
  background: none;
  box-shadow: 0 1px 2px rgba(33, 21, 14, 0.15);
  color: inherit;
  font: 16px/23px Inter, sans-serif;
  resize: none;
}
textarea::placeholder { color: #6b6055; }
.actions { display: flex; gap: 6px; margin-top: 9px; }
.btn {
  display: flex;
  align-items: center;
  gap: 14px;
  height: 36px;
  padding: 0 13px;
  border-radius: 8px;
  font-size: 14px;
  font-weight: 500;
}
.btn-outline {
  gap: 16px;
  border: 1px solid #cfc5b6;
  box-shadow: 0 1px 2px rgba(33, 21, 14, 0.15);
}
.btn-next {
  margin-left: auto;
  background: #e9a78e;
  box-shadow: 0 1px 2px rgba(33, 21, 14, 0.15);
  color: #fdf0e4;
  font-weight: 600;
}

/* overlays */
.toasts {
  position: absolute;
  right: 28px;
  bottom: 28px;
  display: flex;
  flex-direction: column;
  gap: 17px;
  width: 398px;
}
.toast {
  display: flex;
  align-items: center;
  gap: 10px;
  height: 80px;
  padding: 0 14px;
  border-radius: 8px;
  background: #fff;
  box-shadow: 0 4px 12px rgba(0, 0, 0, 0.1);
  color: #171717;
  font: 14px/22px "Open Sans", "Noto Sans", sans-serif;
}
.toast span { max-width: 260px; }
.assistant {
  position: absolute;
  right: 18px;
  bottom: 18px;
  border-radius: 28px;
  box-shadow: 0 4px 10px rgba(0, 0, 0, 0.15);
}
.assistant-dot {
  position: absolute;
  top: 2px;
  right: 2px;
  width: 11px;
  height: 11px;
  border-radius: 6px;
  background: #f4555a;
}

/* taskbar */
.taskbar {
  display: flex;
  align-items: center;
  height: 60px;
  padding: 0 24px 0 230px;
  background: #202020;
  color: #f3f3f3;
  font-family: "Open Sans", "Noto Sans", sans-serif;
}
.apps { display: flex; gap: 5px; }
.apps button {
  position: relative;
  display: grid;
  place-items: center;
  width: 50px;
  height: 50px;
  border-radius: 5px;
}
.apps .focused { background: #303030; }
.run {
  position: absolute;
  bottom: 1px;
  left: 21px;
  width: 8px;
  height: 4px;
  border-radius: 2px;
  background: #9a9a9a;
}
.run-on {
  left: 15px;
  width: 20px;
  background: #dd9ee6;
}
.cal-app {
  width: 25px;
  height: 27px;
  border-radius: 4px 4px 1px 1px;
  background: #dcdde4;
  color: #34353f;
  font: 600 13px/34px Inter, sans-serif;
}
.gcal {
  width: 24px;
  height: 27px;
  border-radius: 4px;
  background: #4a8cf5;
  border-top: 5px solid #8db5fa;
  color: #fff;
  font: 500 14px/20px Inter, sans-serif;
}
.count {
  position: absolute;
  top: 3px;
  right: 4px;
  width: 20px;
  height: 20px;
  border-radius: 10px;
  background: #d79be0;
  color: #111;
  font: 13px/20px "DejaVu Sans", sans-serif;
}
.tray {
  display: flex;
  align-items: center;
  gap: 21px;
  margin-left: auto;
}
.lang { font-size: 14px; }
.status { display: flex; gap: 10px; }
.clock {
  display: flex;
  flex-direction: column;
  align-items: flex-start;
  font: 13px/19px "DejaVu Sans", sans-serif;
}
.clock + button { margin-left: -9px; }
```
